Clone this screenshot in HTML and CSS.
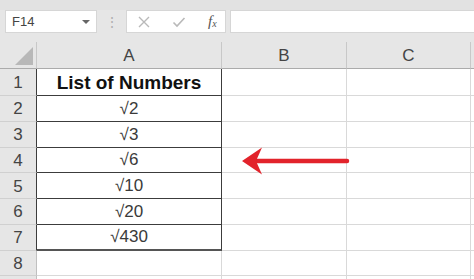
FILE: index.html
```html
<!DOCTYPE html>
<html>
<head>
<meta charset="utf-8">
<link rel="stylesheet" href="styles.css">
</head>
<body>
<div class="app">
  <div class="toolbar">
    <div class="namebox"><span class="name">F14</span><span class="caret"></span></div>
    <div class="sep"><span class="dots">⋮</span></div>
    <div class="fxbox">
      <svg class="ic" width="14" height="14" viewBox="0 0 14 14"><path d="M2 2 L12 12 M12 2 L2 12" stroke="#b9b9b9" stroke-width="1.4" fill="none"/></svg>
      <svg class="ic" width="14" height="14" viewBox="0 0 14 14"><path d="M1.5 7.5 L5 11 L12.5 3" stroke="#b9b9b9" stroke-width="1.6" fill="none"/></svg>
      <span class="fx">f<sub>x</sub></span>
    </div>
    <div class="input"></div>
  </div>
  <div class="sheet">
    <div class="grid">
      <div class="corner"><span class="tri"></span></div>
      <div class="colh">A</div>
      <div class="colh">B</div>
      <div class="colh">C</div>
      <div class="colh end"></div>

      <div class="rowh dk">1</div><div class="cell a head">List of Numbers</div><div class="cell"></div><div class="cell"></div><div class="cell end"></div>
      <div class="rowh dk">2</div><div class="cell a">√2</div><div class="cell"></div><div class="cell"></div><div class="cell end"></div>
      <div class="rowh dk">3</div><div class="cell a">√3</div><div class="cell"></div><div class="cell"></div><div class="cell end"></div>
      <div class="rowh dk">4</div><div class="cell a">√6</div><div class="cell"></div><div class="cell"></div><div class="cell end"></div>
      <div class="rowh dk">5</div><div class="cell a">√10</div><div class="cell"></div><div class="cell"></div><div class="cell end"></div>
      <div class="rowh dk">6</div><div class="cell a">√20</div><div class="cell"></div><div class="cell"></div><div class="cell end"></div>
      <div class="rowh dk">7</div><div class="cell a last">√430</div><div class="cell"></div><div class="cell"></div><div class="cell end"></div>
      <div class="rowh">8</div><div class="cell"></div><div class="cell"></div><div class="cell"></div><div class="cell end"></div>
      <div class="rowh"></div><div class="cell"></div><div class="cell"></div><div class="cell"></div><div class="cell end"></div>
    </div>
    <svg class="arrow" width="120" height="40" viewBox="0 0 120 40">
      <path d="M18 16 L108 16" stroke="#e2232b" stroke-width="4.5" stroke-linecap="round" fill="none"/>
      <path d="M3 16 L23 2.5 L17 16 L23 29.5 Z" fill="#e2232b"/>
    </svg>
  </div>
</div>
</body>
</html>
```

FILE: styles.css
```css
* { box-sizing: border-box; }
html, body { margin: 0; padding: 0; }
body {
  width: 474px;
  height: 279px;
  overflow: hidden;
  background: #e6e6e6;
  font-family: "Liberation Sans", Arial, sans-serif;
}
.app { width: 474px; height: 279px; display: flex; flex-direction: column; overflow: hidden; }
.toolbar {
  height: 42px;
  flex: none;
  padding-top: 10px;
  padding-bottom: 9px;
  display: flex;
  background: linear-gradient(#e2e2e2 0, #e2e2e2 10px, #e6e6e6 10px);
}
.namebox {
  margin-left: 5px;
  width: 92px;
  height: 23px;
  background: #fff;
  border: 1px solid #d6d6d6;
  display: flex;
  align-items: center;
  justify-content: space-between;
  padding: 0 6px 0 6px;
}
.name { font-size: 13px; color: #444; }
.caret {
  width: 0; height: 0;
  border-left: 4px solid transparent;
  border-right: 4px solid transparent;
  border-top: 4px solid #666;
}
.sep {
  width: 29px;
  display: flex;
  align-items: center;
  justify-content: center;
}
.dots { color: #b0b0b0; font-size: 14px; line-height: 1; }
.fxbox {
  width: 100px;
  height: 23px;
  background: #fff;
  border: 1px solid #d6d6d6;
  display: flex;
  align-items: center;
  padding-left: 10px;
  gap: 21px;
}
.fx {
  font-family: "Liberation Serif", "Times New Roman", serif;
  font-style: italic;
  font-size: 15px;
  color: #555;
  margin-left: 1px;
}
.fx sub { font-size: 10px; vertical-align: -1px; }
.input {
  margin-left: 4px;
  flex: 1;
  height: 23px;
  background: #fff;
  border: 1px solid #d6d6d6;
  border-right: none;
}
.sheet { position: relative; flex: 1; background: #fff; overflow: hidden; }
.grid {
  display: grid;
  grid-template-columns: 37px 185px 125px 124px 3px;
  grid-template-rows: 27px 27px repeat(7, 25.75px) 20px;
}
.corner, .colh, .rowh {
  background: #e6e6e6;
  color: #444;
  font-size: 17px;
  display: flex;
  align-items: center;
  justify-content: center;
}
.corner { border-right: 1px solid #c8c8c8; border-bottom: 1px solid #ababab; position: relative; }
.tri {
  position: absolute;
  left: 15px;
  top: 5px;
  width: 18px;
  height: 18px;
  background: #b8b8b8;
  clip-path: polygon(100% 0, 100% 100%, 0 100%);
}
.colh { border-right: 1px solid #c8c8c8; border-bottom: 1px solid #ababab; padding-top: 2px; }
.colh.end { border-right: none; }
.rowh { border-right: 1px solid #c0c0c0; border-bottom: 1px solid #d0d0d0; padding-top: 2px; }
.rowh.dk { border-right: 1px solid #3c3c3c; }
.cell {
  border-right: 1px solid #d9d9d9;
  border-bottom: 1px solid #d9d9d9;
  background: #fff;
}
.cell.end { border-right: none; }
.cell.a {
  border-right: 1px solid #3c3c3c;
  border-bottom: 1px solid #3c3c3c;
  display: flex;
  align-items: center;
  justify-content: center;
  font-size: 17px;
  color: #3a3a3a;
  padding-top: 1px;
}
.cell.a.head { font-weight: bold; font-size: 19px; color: #111; }
.cell.a.last { border-bottom: 2px solid #555; }
.arrow { position: absolute; left: 239px; top: 103px; }
```
